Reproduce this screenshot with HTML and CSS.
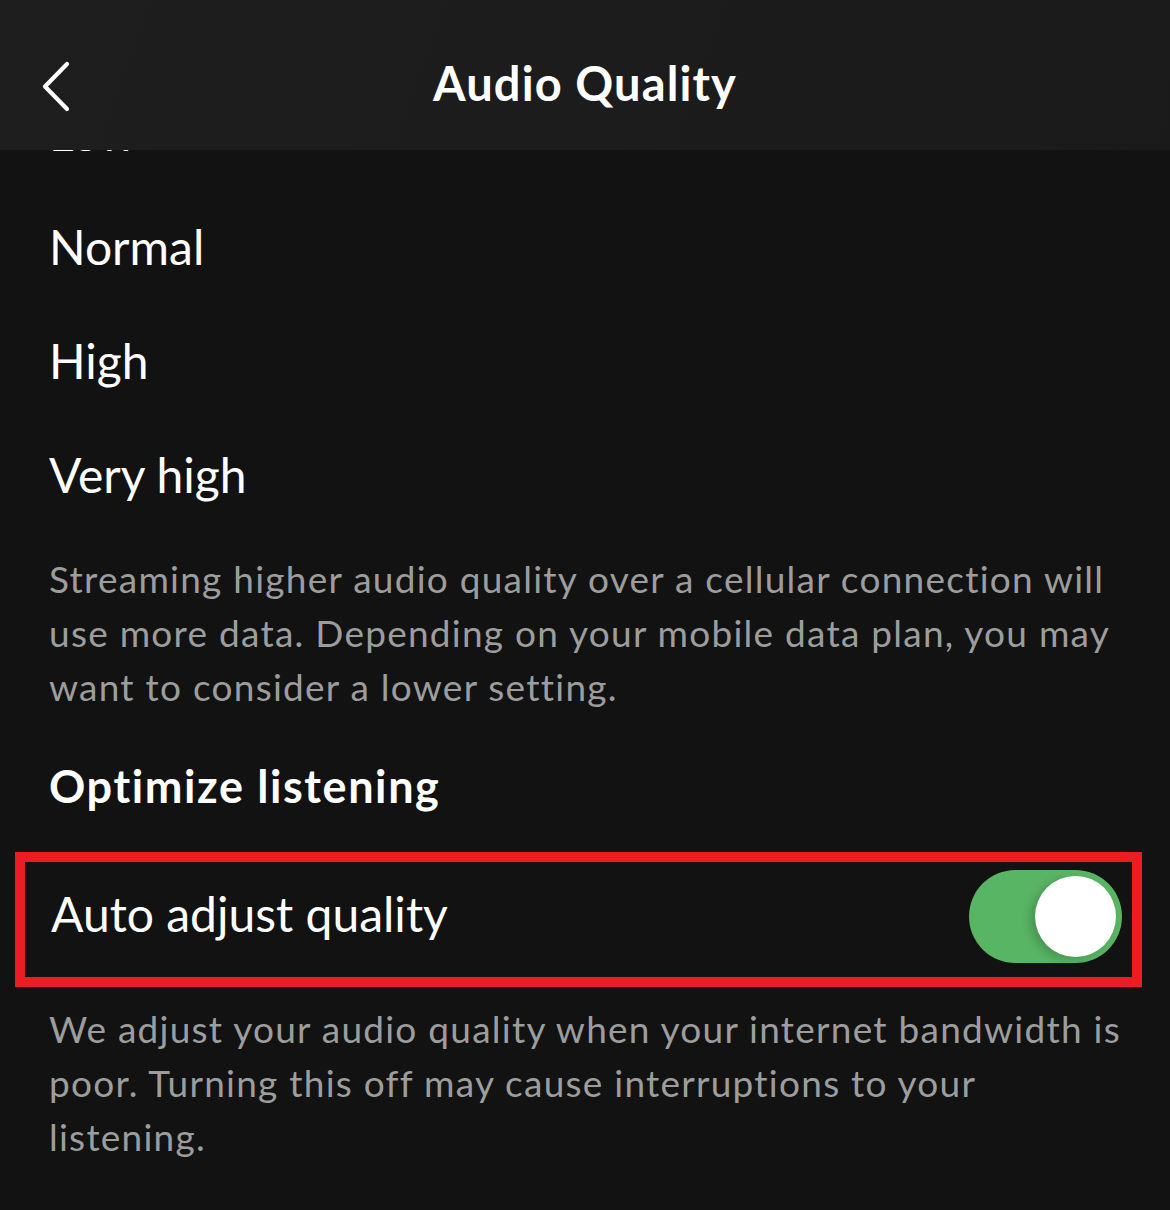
FILE: index.html
```html
<!DOCTYPE html>
<html lang="en">
<head>
<meta charset="utf-8">
<title>Audio Quality</title>
<link rel="stylesheet" href="styles.css">
</head>
<body>
<div class="screen">
  <header class="topbar">
    <button class="back" aria-label="Back">
      <svg width="36" height="56" viewBox="0 0 36 56" aria-hidden="true">
        <path d="M26 3 L4 25.5 L26 48" fill="none" stroke="#ffffff" stroke-width="4.2" stroke-linecap="round" stroke-linejoin="round"/>
      </svg>
    </button>
    <h1 class="title">Audio Quality</h1>
  </header>

  <main class="scroller">
    <ul class="options">
      <li class="option">Low</li>
      <li class="option">Normal</li>
      <li class="option">High</li>
      <li class="option">Very high</li>
    </ul>
    <p class="note">Streaming higher audio quality over a cellular connection will use more data. Depending on your mobile data plan, you may want to consider a lower setting.</p>

    <h2 class="section-title">Optimize listening</h2>

    <div class="setting-row highlighted">
      <span class="setting-label">Auto adjust quality</span>
      <span class="switch is-on" role="switch" aria-checked="true"><span class="knob"></span></span>
    </div>
    <p class="note">We adjust your audio quality when your internet bandwidth is poor. Turning this off may cause interruptions to your listening.</p>
  </main>
</div>
</body>
</html>
```

FILE: styles.css
```css
* { box-sizing: border-box; }

html, body {
  margin: 0;
  padding: 0;
  background: #121212;
}

body {
  font-family: "Lato", "Noto Sans", sans-serif;
  color: #ffffff;
}

.screen {
  position: relative;
  width: 1170px;
  height: 1210px;
  overflow: hidden;
  background: #121212;
}

/* top bar sits over the scrolled list */
.topbar {
  position: absolute;
  top: 0;
  left: 0;
  right: 0;
  height: 150px;
  z-index: 2;
  display: flex;
  align-items: center;
  justify-content: center;
  background: linear-gradient(110deg, #1e1e1e 0%, #1c1c1c 55%, #1a1a1a 100%);
}

.back {
  position: absolute;
  left: 41px;
  top: 61px;
  padding: 0;
  margin: 0;
  border: 0;
  background: none;
  width: 36px;
  height: 56px;
  display: block;
}

.back svg { display: block; }

.title {
  margin: 0;
  font-size: 47px;
  font-weight: 700;
  letter-spacing: 1.1px;
  line-height: 1;
  padding-top: 17px;
}

.scroller {
  padding: 76px 45px 0 49px;
}

.options {
  list-style: none;
  margin: 0;
  padding: 0;
}

.option {
  height: 114px;
  line-height: 114px;
  font-size: 48px;
  font-weight: 400;
}

.note {
  margin: 20px 0 0;
  font-size: 37px;
  line-height: 54px;
  letter-spacing: 1.25px;
  color: #9d9d9d;
}

.section-title {
  margin: 44px 0 0;
  font-size: 45px;
  font-weight: 700;
  line-height: 56px;
  letter-spacing: 1.6px;
}

.setting-row {
  display: flex;
  align-items: center;
  justify-content: space-between;
  height: 135px;
  margin: 38px -17px 0 -34px;
  padding: 0 10px 0 26px;
}

.highlighted {
  border: 10px solid #ec1c24;
}

.setting-label {
  font-size: 48px;
  line-height: 1;
  margin-bottom: 12px;
}

.switch {
  position: relative;
  width: 153px;
  height: 93px;
  border-radius: 47px;
  background: #58b563;
  display: block;
  margin-bottom: 6px;
}

.switch .knob {
  position: absolute;
  top: 6px;
  right: 6px;
  width: 81px;
  height: 81px;
  border-radius: 50%;
  background: #ffffff;
  box-shadow: -5px 3px 9px rgba(0, 0, 0, 0.18);
}

.setting-row + .note {
  margin-top: 15px;
}
```
